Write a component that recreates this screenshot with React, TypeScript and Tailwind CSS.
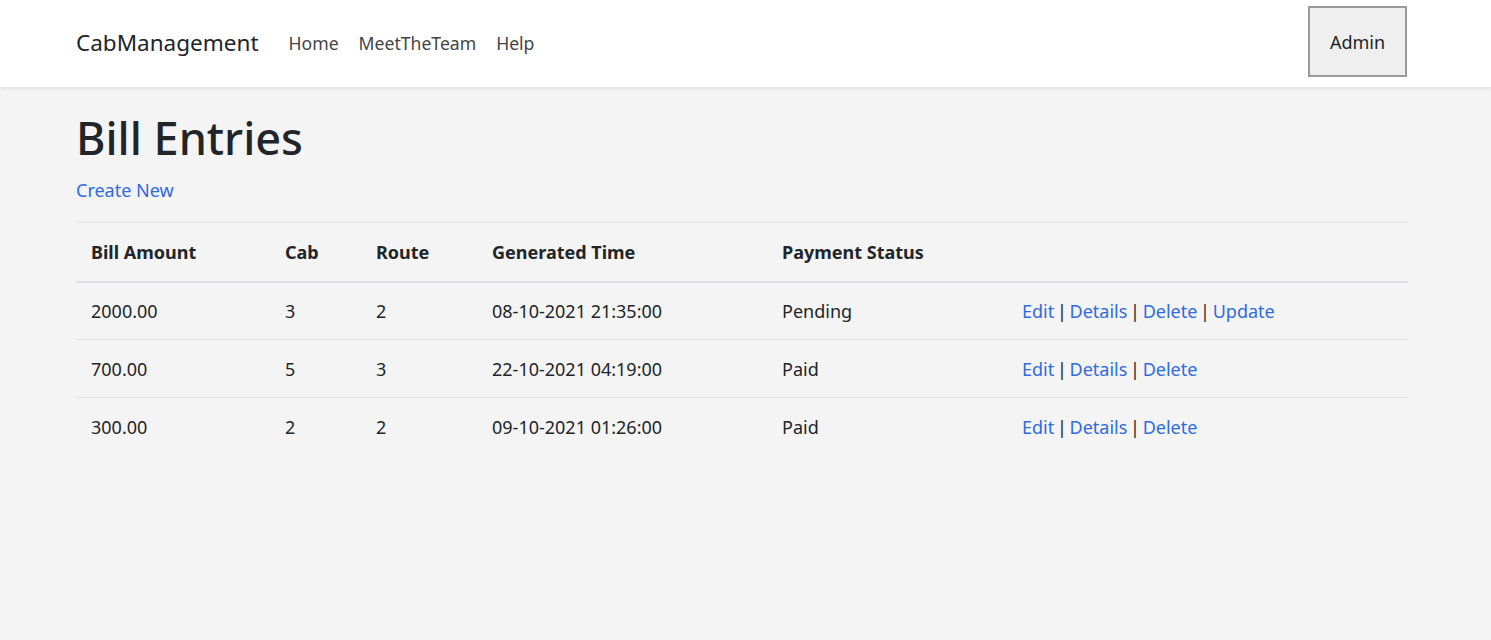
import React from "react";

const rows = [
  { amount: "2000.00", cab: "3", route: "2", time: "08-10-2021 21:35:00", status: "Pending", update: true },
  { amount: "700.00", cab: "5", route: "3", time: "22-10-2021 04:19:00", status: "Paid", update: false },
  { amount: "300.00", cab: "2", route: "2", time: "09-10-2021 01:26:00", status: "Paid", update: false },
];

const font = { fontFamily: '"Segoe UI", "Noto Sans", "Open Sans", sans-serif' };

export default function App() {
  return (
    <div className="min-h-[640px] bg-[#f4f4f4] text-[#212529]" style={font}>
      <nav className="h-[88px] bg-white flex items-center pl-[76px] pr-[84px] shadow-[0_1px_3px_rgba(0,0,0,0.08)] border-b border-[#e5e5e5]">
        <a className="text-[22.5px] text-[#212529] mr-[20px] leading-none">CabManagement</a>
        <a className="text-[17.6px] text-[#444] px-[10px]">Home</a>
        <a className="text-[17.6px] text-[#444] px-[10px]">MeetTheTeam</a>
        <a className="text-[17.6px] text-[#444] px-[10px]">Help</a>
        <div className="flex-1" />
        <button className="w-[99px] h-[71px] mb-[5px] pt-[3px] border-2 border-[#9a9a9a] bg-[#efefef] text-[18px] text-[#212529]">
          Admin
        </button>
      </nav>
      <main className="px-[76px] w-[1484px] pt-[20px]">
        <h1 className="text-[45px] font-medium leading-[60px] mb-[7px]">Bill Entries</h1>
        <a className="block text-[18px] leading-[30px] text-[#2f6be0] mb-[17px]">Create New</a>
        <table className="w-[1332px] border-collapse text-[18px] text-left">
          <thead>
            <tr className="border-t border-[#e2e2e2] border-b-2 border-b-[#dcdee2] h-[59px]">
              <th className="pl-[15px] pt-[2px] w-[194px] font-bold">Bill Amount</th>
              <th className="pl-[15px] pt-[2px] w-[91px] font-bold">Cab</th>
              <th className="pl-[15px] pt-[2px] w-[116px] font-bold">Route</th>
              <th className="pl-[15px] pt-[2px] w-[290px] font-bold">Generated Time</th>
              <th className="pl-[15px] pt-[2px] w-[240px] font-bold">Payment Status</th>
              <th className="pl-[15px]"></th>
            </tr>
          </thead>
          <tbody>
            {rows.map((r, i) => (
              <tr key={i} className={`h-[58px] ${i < rows.length - 1 ? "border-b border-[#e2e2e2]" : ""}`}>
                <td className="pl-[15px] pt-[2px]">{r.amount}</td>
                <td className="pl-[15px] pt-[2px]">{r.cab}</td>
                <td className="pl-[15px] pt-[2px]">{r.route}</td>
                <td className="pl-[15px] pt-[2px]">{r.time}</td>
                <td className="pl-[15px] pt-[2px]">{r.status}</td>
                <td className="pl-[15px] pt-[2px] [word-spacing:-2px]">
                  <a className="text-[#2f6be0]">Edit</a> | <a className="text-[#2f6be0]">Details</a> |{" "}
                  <a className="text-[#2f6be0]">Delete</a>
                  {r.update && (
                    <>
                      {" "}| <a className="text-[#2f6be0]">Update</a>
                    </>
                  )}
                </td>
              </tr>
            ))}
          </tbody>
        </table>
      </main>
    </div>
  );
}
